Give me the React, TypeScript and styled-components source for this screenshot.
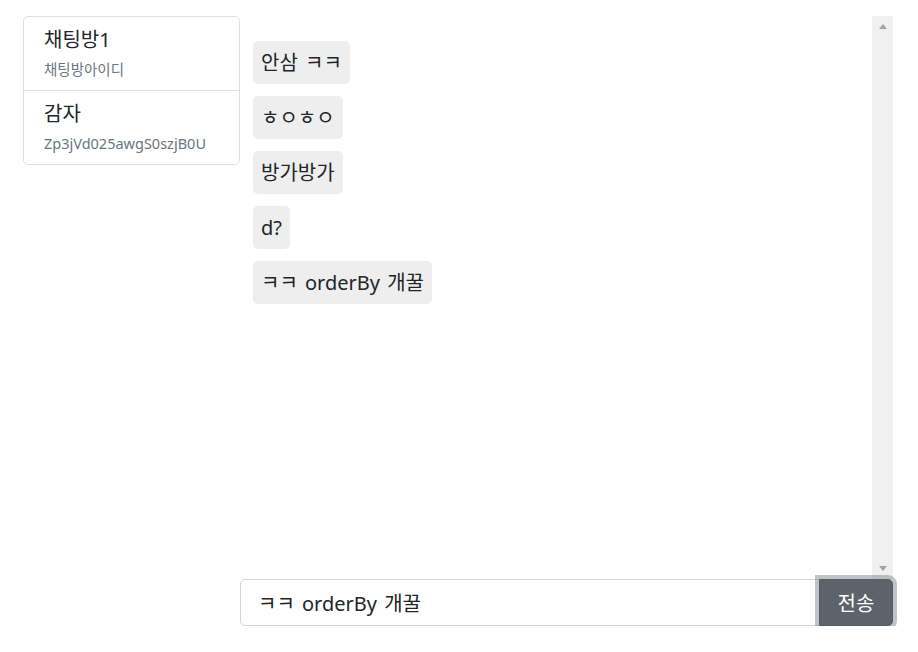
import React, { useState } from 'react'
import styled, { createGlobalStyle } from 'styled-components'

const GlobalStyle = createGlobalStyle`
  body {
    margin: 0;
    background: #fff;
    color: #212529;
    font-family: 'Noto Sans', 'Noto Sans CJK KR', sans-serif;
  }
`

const rooms = [
  { title: '채팅방1', sub: '채팅방아이디' },
  { title: '감자', sub: 'Zp3jVd025awgS0szjB0U' },
]

const messages = ['안삼 ㅋㅋ', 'ㅎㅇㅎㅇ', '방가방가', 'd?', 'ㅋㅋ orderBy 개꿀']

const App: React.FC = () => {
  const [text, setText] = useState('ㅋㅋ orderBy 개꿀')

  return (
    <>
      <GlobalStyle />
      <StyledPage>
        <StyledSidebar>
          <StyledRoomList>
            {rooms.map((room) => (
              <StyledRoom key={room.title}>
                <StyledRoomTitle>{room.title}</StyledRoomTitle>
                <StyledRoomSub>{room.sub}</StyledRoomSub>
              </StyledRoom>
            ))}
          </StyledRoomList>
        </StyledSidebar>
        <StyledChat>
          <StyledChatBox>
            <StyledMessages>
              {messages.map((m, i) => (
                <StyledBubble key={i}>{m}</StyledBubble>
              ))}
            </StyledMessages>
            <StyledScrollbar>
              <StyledArrow />
              <StyledArrow down />
            </StyledScrollbar>
          </StyledChatBox>
          <StyledInputGroup>
            <StyledInput value={text} onChange={(e) => setText(e.target.value)} />
            <StyledSendButton>전송</StyledSendButton>
          </StyledInputGroup>
        </StyledChat>
      </StyledPage>
    </>
  )
}

const StyledPage = styled.div`
  display: flex;
  padding: 16px 25px 0 23px;
`

const StyledSidebar = styled.div`
  width: 217px;
  flex-shrink: 0;
`

const StyledRoomList = styled.div`
  border: 1px solid rgba(0, 0, 0, 0.125);
  border-radius: 5px;
  overflow: hidden;
`

const StyledRoom = styled.div`
  padding: 8px 20px 6px;
  & + & {
    border-top: 1px solid rgba(0, 0, 0, 0.125);
  }
`

const StyledRoomTitle = styled.div`
  font-size: 20px;
  line-height: 30px;
  color: #212529;
`

const StyledRoomSub = styled.div`
  font-size: 14.5px;
  line-height: 29px;
  color: #6c757d;
`

const StyledChat = styled.div`
  flex: 1;
  display: flex;
  flex-direction: column;
`

const StyledChatBox = styled.div`
  height: 563px;
  display: flex;
`

const StyledMessages = styled.div`
  flex: 1;
  display: flex;
  flex-direction: column;
  align-items: flex-start;
  gap: 12px;
  padding: 25px 13px;
`

const StyledBubble = styled.div`
  background: #eeeeee;
  border-radius: 5px;
  padding: 6px 8px;
  font-size: 20px;
  line-height: 31px;
  word-spacing: 2px;
  color: #212529;
`

const StyledScrollbar = styled.div`
  width: 21px;
  background: #f0f0f0;
  display: flex;
  flex-direction: column;
  justify-content: space-between;
  align-items: center;
  padding: 8px 0;
`

const StyledArrow = styled.div<{ down?: boolean }>`
  width: 0;
  height: 0;
  border-left: 4.5px solid transparent;
  border-right: 4.5px solid transparent;
  ${(p) => (p.down ? 'border-top: 5px solid #a3a3a3;' : 'border-bottom: 5px solid #a3a3a3;')}
`

const StyledInputGroup = styled.div`
  display: flex;
  height: 47px;
`

const StyledInput = styled.input`
  flex: 1;
  min-width: 0;
  box-sizing: border-box;
  border: 1px solid #ced4da;
  border-radius: 5px 0 0 5px;
  padding: 0 17px;
  font-family: 'Noto Sans', 'Noto Sans CJK KR', sans-serif;
  font-size: 20px;
  word-spacing: 2px;
  color: #212529;
  outline: none;
`

const StyledSendButton = styled.button`
  width: 74px;
  margin-left: -1px;
  box-sizing: border-box;
  border: 1px solid #565e64;
  border-radius: 0 5px 5px 0;
  background: #5c636a;
  color: #fff;
  font-family: 'Noto Sans', 'Noto Sans CJK KR', sans-serif;
  font-size: 20px;
  box-shadow: 0 0 0 4px rgba(130, 138, 145, 0.5);
  position: relative;
  z-index: 1;
  cursor: pointer;
`

export default App
